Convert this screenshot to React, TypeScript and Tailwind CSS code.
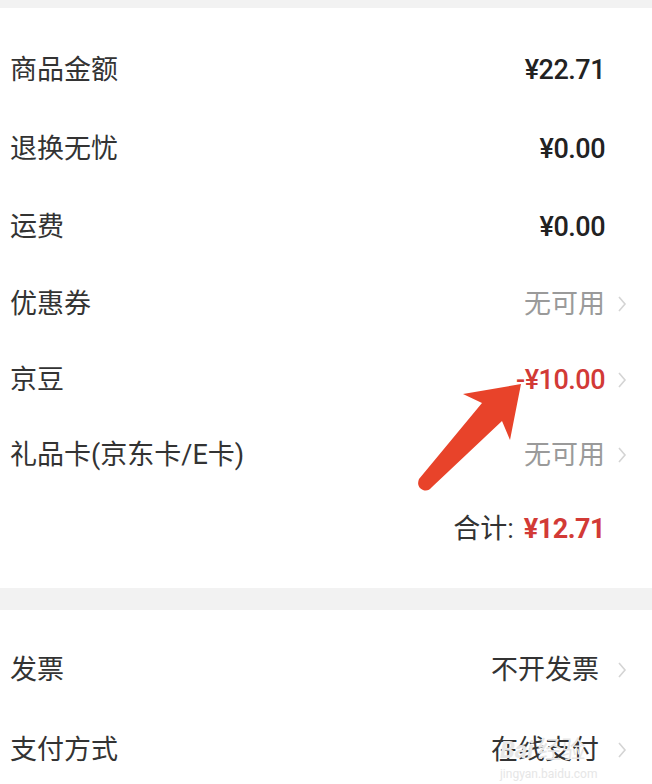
import React from 'react';

type Row = {
  label: string;
  value?: React.ReactNode;
  arrow?: boolean;
  h: string;
};

const Chevron = () => (
  <svg width="10" height="18" viewBox="0 0 10 18" className="shrink-0">
    <polyline points="2,2 8,9 2,16" fill="none" stroke="#d4d4d4" strokeWidth="1.6" />
  </svg>
);

const font = "font-['Roboto','Noto_Sans_CJK_SC',sans-serif]";

function LineItem({ label, value, arrow, h, wide }: Row & { wide?: boolean }) {
  return (
    <div className={`flex ${h} items-center justify-between pl-[10px] pr-[25px]`}>
      <span className="text-[27px] text-[#333]">{label}</span>
      <div className="flex items-center">
        <div className="text-[27px]">{value}</div>
        <div className={`flex ${wide ? 'w-[28px]' : 'w-[22px]'} justify-end`}>{arrow && <Chevron />}</div>
      </div>
    </div>
  );
}

export default function App() {
  const summary: Row[] = [
    { label: '商品金额', h: 'h-[80px]', value: <span className="font-medium tracking-[-0.5px] text-[#222]">¥22.71</span> },
    { label: '退换无忧', h: 'h-[79px]', value: <span className="font-medium tracking-[-0.5px] text-[#222]">¥0.00</span> },
    { label: '运费', h: 'h-[77px]', value: <span className="font-medium tracking-[-0.5px] text-[#222]">¥0.00</span> },
    { label: '优惠券', h: 'h-[76px]', value: <span className="text-[#9a9a9a]">无可用</span>, arrow: true },
    { label: '京豆', h: 'h-[76px]', value: <span className="font-medium tracking-[-0.5px] text-[#d23a36]">-¥10.00</span>, arrow: true },
    { label: '礼品卡(京东卡/E卡)', h: 'h-[74px]', value: <span className="text-[#9a9a9a]">无可用</span>, arrow: true },
  ];

  const extra: Row[] = [
    { label: '发票', h: 'h-[80px]', value: <span className="text-[#333]">不开发票</span>, arrow: true },
    { label: '支付方式', h: 'h-[80px]', value: <span className="text-[#333]">在线支付</span>, arrow: true },
  ];

  return (
    <div className={`relative h-[784px] w-[652px] overflow-hidden bg-[#f2f2f2] ${font}`}>
      <div className="mt-[8px] bg-white pt-[22px] pb-[22px]">
        {summary.map((r) => (
          <LineItem key={r.label} {...r} />
        ))}
        <div className="flex h-[74px] items-center justify-end pr-[47px] text-[27px]">
          <span className="text-[#333]">合计:</span>
          <span className="ml-[10px] font-bold tracking-[-0.5px] text-[#d23a36]">¥12.71</span>
        </div>
      </div>

      <div className="mt-[22px] bg-white pt-[20px] pb-[20px]">
        {extra.map((r) => (
          <LineItem key={r.label} {...r} wide />
        ))}
      </div>

      {/* annotation arrow */}
      <svg className="absolute left-0 top-0 pointer-events-none" width="652" height="784">
        <path
          d="M521 384 L463 394 L482 403 L419 479 Q416 487 423 490 Q428 492 432 487 L502 421 L510 440 Z"
          fill="#e8432a"
        />
      </svg>

      {/* watermark */}
      <div className="absolute left-[500px] top-[738px] flex flex-col items-start text-[#e6e6e6] pointer-events-none">
        <span className="text-[24px] font-bold italic leading-none">Bai<span className="ml-[4px] not-italic font-normal">经验</span></span>
        <span className="text-[12px] leading-none mt-[6px]">jingyan.baidu.com</span>
      </div>
    </div>
  );
}
